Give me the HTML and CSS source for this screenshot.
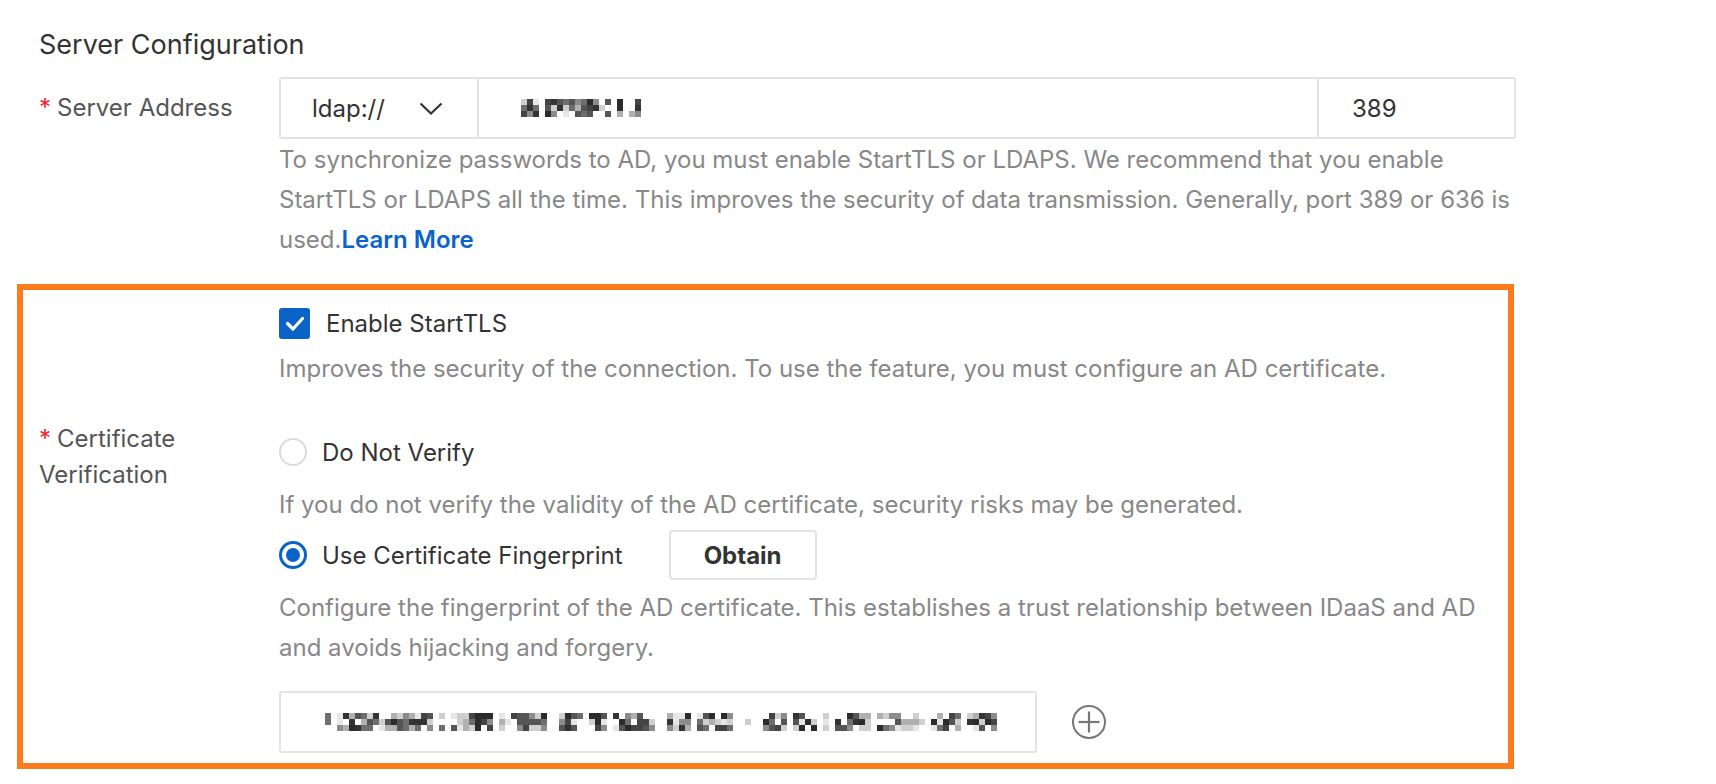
FILE: index.html
```html
<!DOCTYPE html>
<html lang="en">
<head>
<meta charset="utf-8">
<title>Server Configuration</title>
<link rel="stylesheet" href="styles.css">
</head>
<body>
<div class="page">
  <h2 class="section-title">Server Configuration</h2>

  <div class="form-item plain">
    <div class="label label-single"><span class="req">*</span>Server Address</div>
    <div class="control">
      <div class="input-group">
        <div class="select">
          <span>ldap://</span>
          <svg class="chevron" width="24" height="13" viewBox="0 0 24 13"><polyline points="1.5,1.5 12,11.5 22.5,1.5" fill="none" stroke="#333" stroke-width="2.2"/></svg>
        </div>
        <div class="host"><span class="mosaic" data-w="126" data-seed="7"></span></div>
        <div class="port">389</div>
      </div>
      <p class="help help-first">To synchronize passwords to AD, you must enable StartTLS or LDAPS. We recommend that you enable<br>StartTLS or LDAPS all the time. This improves the security of data transmission. Generally, port 389 or 636 is<br>used.<a class="link" href="#">Learn More</a></p>
    </div>
  </div>

  <div class="highlight">
    <div class="form-item">
      <div class="label"></div>
      <div class="control">
        <label class="check-row">
          <span class="checkbox">
            <svg width="31" height="31" viewBox="0 0 31 31"><polyline points="8.5,15.5 14,21 23.5,10.5" fill="none" stroke="#fff" stroke-width="3.2" stroke-linecap="round" stroke-linejoin="round"/></svg>
          </span>
          <span class="opt-text">Enable StartTLS</span>
        </label>
        <p class="help help-check">Improves the security of the connection. To use the feature, you must configure an AD certificate.</p>
      </div>
    </div>

    <div class="form-item cert-item">
      <div class="label label-multi">
        <span class="label-line"><span class="req">*</span>Certificate</span>
        <span class="label-line">Verification</span>
      </div>
      <div class="control">
        <div class="radio-row first">
          <span class="radio"></span>
          <span class="opt-text">Do Not Verify</span>
        </div>
        <p class="help help-radio">If you do not verify the validity of the AD certificate, security risks may be generated.</p>
        <div class="radio-row second">
          <span class="radio checked"><span class="dot"></span></span>
          <span class="opt-text">Use Certificate Fingerprint</span>
          <button class="btn" type="button">Obtain</button>
        </div>
        <p class="help help-finger">Configure the fingerprint of the AD certificate. This establishes a trust relationship between IDaaS and AD<br>and avoids hijacking and forgery.</p>
        <div class="finger-row">
          <div class="finger-input"><span class="mosaic" data-w="690" data-seed="31"></span></div>
          <svg class="add" width="36" height="36" viewBox="0 0 36 36">
            <circle cx="18" cy="18" r="16" fill="none" stroke="#777" stroke-width="2"/>
            <line x1="7.5" y1="18" x2="28.5" y2="18" stroke="#777" stroke-width="2.2"/>
            <line x1="18" y1="7.5" x2="18" y2="28.5" stroke="#777" stroke-width="2.2"/>
          </svg>
        </div>
      </div>
    </div>
  </div>
</div>
<script src="script.js"></script>
</body>
</html>
```

FILE: styles.css
```css
* {
  box-sizing: border-box;
  margin: 0;
  padding: 0;
}

body {
  margin: 0;
  background: #fff;
  font-family: Inter, "Liberation Sans", sans-serif;
  font-size: 24px;
  color: #333;
}

.page {
  width: 1716px;
  height: 784px;
  overflow: hidden;
  padding: 25px 0 0 17px;
}

.section-title {
  padding-left: 22px;
  font-size: 27px;
  font-weight: 400;
  line-height: 40px;
  height: 40px;
  color: #333;
}

.form-item {
  display: flex;
}

.form-item.plain {
  padding-left: 22px;
  margin-top: 12px;
}

.label {
  width: 240px;
  flex: none;
  color: #555;
}

.label-single {
  line-height: 62px;
}

.label-multi {
  line-height: 36px;
  padding-top: 1px;
}

.label-line {
  display: block;
}

.req {
  color: #f5222d;
  margin-right: 6px;
}

.control {
  flex: 1;
  min-width: 0;
}

.input-group {
  display: flex;
  width: 1237px;
  height: 62px;
  border: 2px solid #e3e3e3;
  border-radius: 3px;
}

.select {
  width: 198px;
  flex: none;
  display: flex;
  align-items: center;
  justify-content: space-between;
  padding: 0 34px 0 31px;
  border-right: 2px solid #e3e3e3;
  color: #333;
}

.chevron {
  display: block;
}

.host {
  flex: 1;
  display: flex;
  align-items: center;
  padding-left: 36px;
}

.port {
  width: 197px;
  flex: none;
  display: flex;
  align-items: center;
  padding-left: 33px;
  border-left: 2px solid #e3e3e3;
  color: #333;
}

.mosaic {
  display: block;
  line-height: 0;
}

.help {
  color: #888;
  line-height: 40px;
  white-space: nowrap;
}

.help-first {
  margin-top: 1px;
}

.link {
  color: #0a64c8;
  font-weight: 600;
  text-decoration: none;
}

.highlight {
  width: 1497px;
  margin-top: 24px;
  border: 6px solid #fd7b1c;
  padding: 11px 0 10px 16px;
}

.check-row {
  display: flex;
  align-items: center;
  height: 44px;
  gap: 16px;
}

.checkbox {
  width: 31px;
  height: 31px;
  flex: none;
  background: #0a64c8;
  border-radius: 3px;
  display: block;
}

.checkbox svg {
  display: block;
}

.opt-text {
  color: #333;
}

.help-check {
  margin-top: 4px;
}

.cert-item {
  margin-top: 31px;
}

.radio-row {
  display: flex;
  align-items: center;
  gap: 15px;
}

.radio-row.first {
  height: 64px;
}

.radio-row.second {
  height: 58px;
  margin-top: 1px;
}

.radio {
  width: 28px;
  height: 28px;
  flex: none;
  border: 2px solid #dcdcdc;
  border-radius: 50%;
  background: #fff;
  display: flex;
  align-items: center;
  justify-content: center;
}

.radio.checked {
  border: 3px solid #0a64c8;
}

.dot {
  width: 14px;
  height: 14px;
  border-radius: 50%;
  background: #0a64c8;
}

.help-radio {
  margin-top: 1px;
}

.btn {
  margin-left: 31px;
  width: 148px;
  height: 50px;
  border: 2px solid #e3e3e3;
  border-radius: 4px;
  background: #fff;
  font-family: inherit;
  font-size: 24px;
  font-weight: 700;
  color: #333;
}

.help-finger {
  margin-top: 4px;
}

.finger-row {
  display: flex;
  align-items: center;
  gap: 34px;
  margin-top: 23px;
}

.finger-input {
  width: 758px;
  height: 62px;
  border: 2px solid #e3e3e3;
  border-radius: 3px;
  display: flex;
  align-items: center;
  padding-left: 32px;
}

.add {
  display: block;
  flex: none;
}
```

FILE: script.js
```js
document.querySelectorAll('.mosaic').forEach(function (el) {
  var w = +el.dataset.w;
  var s = +el.dataset.seed;
  function rnd() {
    s = (s * 16807) % 2147483647;
    return s / 2147483647;
  }
  var cell = 6, rows = 3, cols = Math.floor(w / cell);
  var shades = ['#e6e6e6', '#cfcfcf', '#b0b0b0', '#8c8c8c', '#6e6e6e', '#555555', '#444444', '#333333', '#2b2b2b'];
  var out = '<svg xmlns="http://www.w3.org/2000/svg" width="' + cols * cell + '" height="' + rows * cell + '">';
  for (var c = 0; c < cols; c++) {
    if (rnd() < 0.15) continue;
    for (var r = 0; r < rows; r++) {
      var p = rnd();
      if (p < 0.18) continue;
      var shade = shades[Math.floor(rnd() * shades.length)];
      out += '<rect x="' + c * cell + '" y="' + r * cell + '" width="' + cell + '" height="' + cell + '" fill="' + shade + '"/>';
    }
  }
  out += '</svg>';
  el.innerHTML = out;
});
```
